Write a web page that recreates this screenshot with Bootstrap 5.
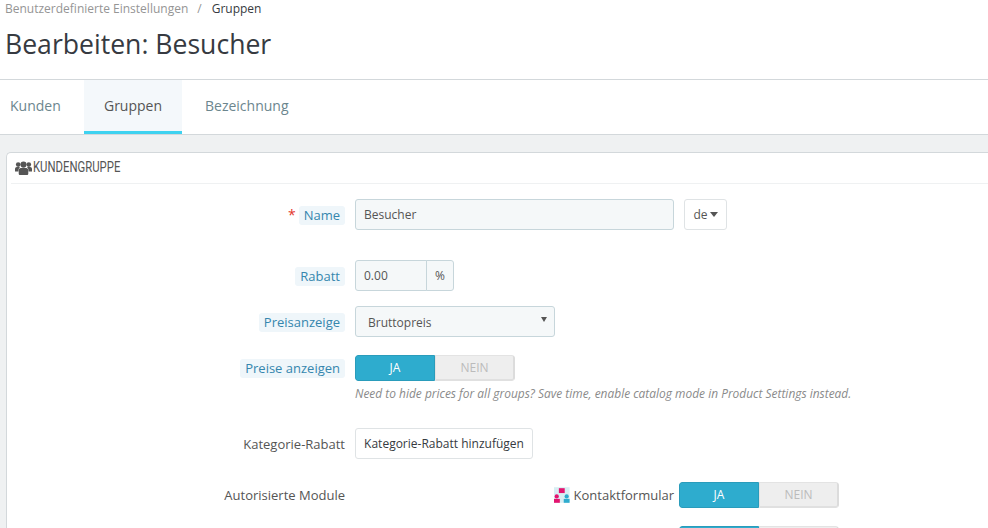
<!DOCTYPE html>
<html lang="de">
<head>
<meta charset="utf-8">
<title>Bearbeiten: Besucher</title>
<link href="https://cdn.jsdelivr.net/npm/bootstrap@5.3.0/dist/css/bootstrap.min.css" rel="stylesheet">
<style>
html,body{height:528px;overflow:hidden}
body{background:#eff1f2;font-family:"Open Sans","Noto Sans",sans-serif;font-size:12px;color:#555;line-height:18px}
.page-head{background:#fff;height:80px;border-bottom:1px solid #d3d8db;padding:0 5px}
.crumbs{font-size:12px;height:16px;line-height:17px;color:#959595;display:flex}
.crumbs .sep{margin:0 9px}
.crumbs .here{color:#363a41;margin-left:1px;font-size:12px}
.page-title{font-size:26.600px;font-weight:400;line-height:32px;margin:12px 0 0;color:#363a41}
.tabbar{background:#fff;height:55px;border-bottom:1px solid #d3d8db;display:flex;padding-left:10px;font-size:14px;line-height:52px;color:#6c868e}
.tabbar a{color:#6c868e;text-decoration:none;display:block;height:54px;border-bottom:3px solid transparent}
.tabbar .t1{width:74px}
.tabbar .t2{width:98px;text-align:center;background:#f4f8fb;border-bottom-color:#3ed2f0;color:#555}
.tabbar .t3{margin-left:23px}
.panel-box{background:#fff;border:1px solid #d3d8db;border-right:0;border-radius:5px 0 0 0;margin:17px 0 0 6px;height:400px;padding:0 0 0 4px}
.panel-top{height:31px;border-bottom:1px solid #eff1f2;display:flex;align-items:center;gap:1px;padding-left:4px}
.panel-top span{font-family:"Roboto",sans-serif;font-size:14px;line-height:16px;margin-top:-2px;color:#555;text-transform:uppercase;transform:scaleX(.81);transform-origin:left center;display:inline-block}
.f-row{display:flex;align-items:center}
.f-label{width:334px;flex:none;text-align:right;font-size:13px;margin-right:10px;color:#555}
.hint{background:#eff6fa;color:#3586ae;border-radius:3px;padding:0 5px;display:inline-block;line-height:19px}
.nudge{padding-top:2px}
.req{color:#e3382c;margin-right:3px;font-size:14px}
.fld{height:31px;border:1px solid #c7d6db;border-radius:3px;background:#f5f8f9;padding:0 8px;display:flex;align-items:center;color:#555;font-size:12px;line-height:18px}
.fld-name{width:319px}
.lang{margin-left:10px;width:43px;height:31px;border:1px solid #dfe3e5;border-radius:3px;background:#fff;display:flex;align-items:center;justify-content:center;gap:2px;color:#555;font-size:12px;padding:0}
.tri{width:0;height:0;border-left:4.500px solid transparent;border-right:4.500px solid transparent;border-top:5px solid #555}
.fld-pct{width:72px;border-radius:3px 0 0 3px}
.fld-unit{width:28px;border-left:1px solid #c7d6db;margin-left:-1px;border-radius:0 3px 3px 0;justify-content:center;padding:0;font-size:12px;line-height:16px}
.fld-sel{width:200px;padding:2px 7px 0 12px;justify-content:space-between;font-size:12px}
.tri-s{border-left-width:3px;border-right-width:3px;margin-top:-6px}
.sw{width:160px;height:26px;display:flex;border-radius:3px;overflow:hidden;flex:none;font-size:12px;line-height:24px;text-align:center}
.sw .on{width:80px;background:#2eacce;color:#fff;border:1px solid #2a9cbb;border-radius:3px 0 0 3px}
.sw .off{width:80px;background:#eeeeee;color:#bbb;border:1px solid #e3e3e3;border-right:2px solid #dcdcdc;border-bottom:2px solid #e0e0e0;border-radius:0 3px 3px 0}
.help{font-style:italic;font-size:11.950px;color:#8a8a8a;line-height:16px;margin:5px 0 0 344px;white-space:nowrap}
.add{height:31px;width:178px;padding:0;border:1px solid #dfe3e5;border-radius:3px;background:#fff;color:#363a41;font-size:12px;line-height:18px}
.mods{margin-left:199px;width:120px;display:flex;align-items:center;justify-content:flex-end;gap:4px;font-size:13px;white-space:nowrap}
.r1{margin-top:15px}.r2{margin-top:30px}.r3{margin-top:15px}.r4{margin-top:18px}.r5{margin-top:26px}.r6{margin-top:23px}.r7{margin-top:18px}
.spc{margin-left:5px}
</style>
</head>
<body>
<div class="page-head">
  <nav class="crumbs"><span>Benutzerdefinierte Einstellungen</span><span class="sep">/</span><span class="here">Gruppen</span></nav>
  <h1 class="page-title">Bearbeiten: Besucher</h1>
</div>
<div class="tabbar">
  <a class="t1" href="#">Kunden</a>
  <a class="t2" href="#">Gruppen</a>
  <a class="t3" href="#">Bezeichnung</a>
</div>
<div class="panel-box">
  <div class="panel-top">
    <svg width="17" height="14" viewBox="0 0 17 14" fill="#555" aria-hidden="true"><circle cx="3.2" cy="3.6" r="2.3"/><circle cx="13.8" cy="3.6" r="2.3"/><circle cx="8.5" cy="3.6" r="3.1"/><path d="M0 10.5V8c0-1.2.8-2 1.8-2H4c.4 0 .7.1 1 .3C3.800 7.300 3.300 8.600 3.300 10.500H0zM17 10.500V8c0-1.200-.8-2-1.800-2H13c-.4 0-.7.100-1 .3 1.200 1 1.700 2.300 1.700 4.200H17zM5.800 7h5.400c1.300 0 2.100 1 2.100 2.400v3.100c0 1-.6 1.500-1.500 1.500H5.200c-.9 0-1.500-.5-1.500-1.500V9.400C3.700 8 4.500 7 5.800 7z"/></svg>
    <span>Kundengruppe</span>
  </div>
  <div class="f-row r1">
    <div class="f-label nudge"><span class="req">*</span><span class="hint">Name</span></div>
    <div class="fld fld-name">Besucher</div>
    <button type="button" class="lang">de<i class="tri"></i></button>
  </div>
  <div class="f-row r2">
    <div class="f-label nudge"><span class="hint">Rabatt</span></div>
    <div class="fld fld-pct">0.00</div>
    <div class="fld fld-unit">%</div>
  </div>
  <div class="f-row r3">
    <div class="f-label nudge"><span class="hint">Preisanzeige</span></div>
    <div class="fld fld-sel">Bruttopreis<i class="tri tri-s"></i></div>
  </div>
  <div class="f-row r4">
    <div class="f-label"><span class="hint">Preise anzeigen</span></div>
    <div class="sw"><div class="on">JA</div><div class="off">NEIN</div></div>
  </div>
  <p class="help">Need to hide prices for all groups? Save time, enable catalog mode in Product Settings instead.</p>
  <div class="f-row r5">
    <div class="f-label">Kategorie-Rabatt</div>
    <button type="button" class="add">Kategorie-Rabatt hinzufügen</button>
  </div>
  <div class="f-row r6">
    <div class="f-label">Autorisierte Module</div>
    <div class="mods">
      <svg width="16" height="16" viewBox="0 0 16 16" aria-hidden="true"><rect width="16" height="16" fill="#d8eef3"/><rect x="5" y="1" width="6" height="5" fill="#e4146f"/><circle cx="2.800" cy="9.500" r="2.200" fill="#e4146f"/><circle cx="13" cy="9.500" r="2.200" fill="#2eacce"/><rect y="12" width="6" height="4" fill="#e4146f"/><rect x="10" y="12" width="6" height="4" fill="#2eacce"/></svg>
      Kontaktformular
    </div>
    <div class="sw spc"><div class="on">JA</div><div class="off">NEIN</div></div>
  </div>
  <div class="f-row r7">
    <div class="f-label"></div>
    <div class="mods"></div>
    <div class="sw spc"><div class="on"></div><div class="off"></div></div>
  </div>
</div>
</body>
</html>
